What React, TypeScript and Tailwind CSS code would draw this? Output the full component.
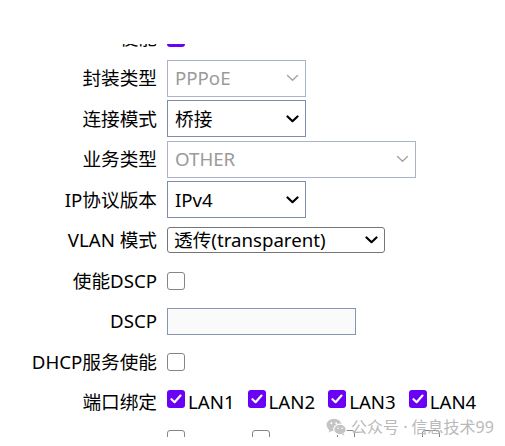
// WAN connection settings form, partly scrolled out of view.

import type { ReactNode } from "react";

const FONT = { fontFamily: '"Noto Sans", "Noto Sans CJK SC", sans-serif' };

function Row({ label, children }: { label: string; children?: ReactNode }) {
  return (
    <div className="flex h-[40.5px] items-center">
      <div className="w-[157px] shrink-0 text-right">{label}</div>
      <div className="ml-[10px] flex items-center">{children}</div>
    </div>
  );
}

function Chevron({ disabled }: { disabled?: boolean }) {
  return (
    <svg width="13" height="8" viewBox="0 0 13 8" className="shrink-0">
      <path
        d="M1.5 1.5 L6.5 6.2 L11.5 1.5"
        fill="none"
        stroke={disabled ? "#a3a3a3" : "#000"}
        strokeWidth={disabled ? 1.4 : 2.2}
        strokeLinecap="round"
        strokeLinejoin="round"
      />
    </svg>
  );
}

function Select({ value, width, disabled }: { value: string; width: string; disabled?: boolean }) {
  return (
    <div
      className={`flex h-[37px] items-center justify-between border pl-[7px] pr-[6px] ${width} ${
        disabled ? "border-[#a9b4c9] text-[#9a9a9a]" : "border-[#7d8cae] text-black"
      }`}
    >
      <span>{value}</span>
      <Chevron disabled={disabled} />
    </div>
  );
}

function Checkbox({ checked, className = "" }: { checked?: boolean; className?: string }) {
  if (checked) {
    return (
      <span className={`flex h-[18px] w-[18px] shrink-0 items-center justify-center rounded-[3px] bg-[#6a00f4] ${className}`}>
        <svg width="12" height="10" viewBox="0 0 12 10">
          <path d="M1.5 5.2 L4.6 8.2 L10.5 1.6" fill="none" stroke="#fff" strokeWidth="2.2" strokeLinecap="round" strokeLinejoin="round" />
        </svg>
      </span>
    );
  }
  return <span className={`h-[18px] w-[18px] shrink-0 rounded-[3px] border-[1.5px] border-[#858585] bg-white ${className}`} />;
}

function PortGroup({ names, checked }: { names: string[]; checked?: boolean }) {
  return (
    <div className="flex items-center gap-[13px]">
      {names.map((n) => (
        <div key={n} className="flex items-center gap-[3px]">
          <Checkbox checked={checked} className="mb-[7px]" />
          <span>{n}</span>
        </div>
      ))}
    </div>
  );
}

function WeChatIcon() {
  return (
    <svg width="21" height="18" viewBox="0 0 21 18">
      <ellipse cx="8" cy="7" rx="7.5" ry="6.3" fill="#c4c4c4" />
      <path d="M3.5 11.5 L2.8 14.5 L6.5 12.5 Z" fill="#c4c4c4" />
      <ellipse cx="14" cy="11.5" rx="6.3" ry="5.3" fill="#c4c4c4" stroke="#fff" strokeWidth="1.2" />
      <path d="M17.5 15.5 L18.5 17.8 L15.5 16.3 Z" fill="#c4c4c4" />
      <circle cx="5.3" cy="5.3" r="1" fill="#fff" />
      <circle cx="10.2" cy="5.3" r="1" fill="#fff" />
      <circle cx="12" cy="10.2" r="0.8" fill="#fff" />
      <circle cx="16.2" cy="10.2" r="0.8" fill="#fff" />
    </svg>
  );
}

export default function App() {
  return (
    <div className="relative flex h-[446px] w-[505px] flex-col overflow-hidden bg-white text-[18.67px] text-black" style={FONT}>
      <div className="h-[44px] shrink-0" />
      <div className="h-[393px] shrink-0 overflow-hidden">
        <div className="mt-[-26.75px]">
          <Row label="使能">
            <Checkbox checked />
          </Row>
          <Row label="封装类型">
            <Select value="PPPoE" width="w-[139px]" disabled />
          </Row>
          <Row label="连接模式">
            <Select value="桥接" width="w-[139px]" />
          </Row>
          <Row label="业务类型">
            <Select value="OTHER" width="w-[249px]" disabled />
          </Row>
          <Row label="IP协议版本">
            <Select value="IPv4" width="w-[139px]" />
          </Row>
          <Row label="VLAN 模式">
            <div className="flex h-[26px] w-[218px] items-center justify-between rounded-[3px] border border-[#767676] pl-[6px] pr-[6px]">
              <span>透传(transparent)</span>
              <Chevron />
            </div>
          </Row>
          <Row label="使能DSCP">
            <Checkbox />
          </Row>
          <Row label="DSCP">
            <div className="h-[27px] w-[189px] border-[1.5px] border-[#8794b2] bg-[#fafafa]" />
          </Row>
          <Row label="DHCP服务使能">
            <Checkbox />
          </Row>
          <Row label="端口绑定">
            <PortGroup names={["LAN1", "LAN2", "LAN3", "LAN4"]} checked />
          </Row>
          <Row label="">
            <PortGroup names={["SSID1", "SSID2", "SSID3", "SSID4"]} />
          </Row>
        </div>
      </div>
      <div className="flex-1 bg-white" />
      <div className="absolute left-[326px] top-[415px] flex items-center gap-[4px] text-[16px] text-[#b9b9b9]">
        <WeChatIcon />
        <span>公众号 · 信息技术99</span>
      </div>
    </div>
  );
}
